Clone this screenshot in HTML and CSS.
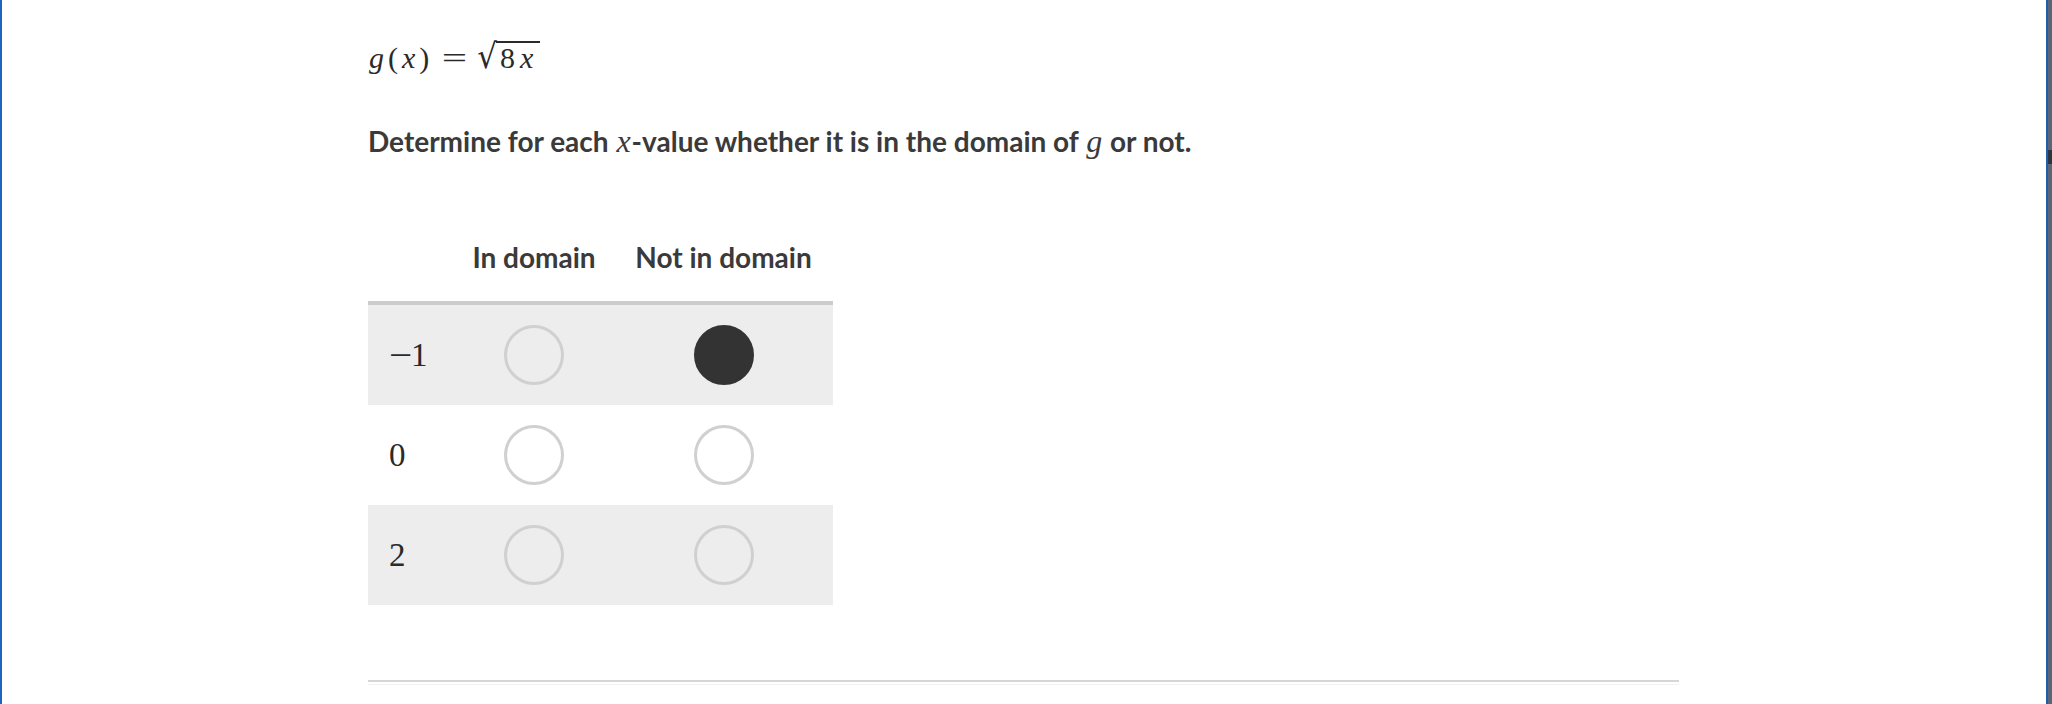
FILE: index.html
```html
<!DOCTYPE html>
<html lang="en">
<head>
<meta charset="utf-8">
<title>Domain of g</title>
<link rel="stylesheet" href="styles.css">
</head>
<body>
<div class="app">
  <div class="edge-left"></div>
  <main class="page">
    <div class="content">
      <p class="formula"><i class="var">g</i><span class="paren">(</span><i class="var">x</i><span class="paren">)</span><span class="rel">=</span><span class="surd">√</span><span class="radicand">8<i class="var">x</i></span></p>
      <p class="question">Determine for each <i class="math">x</i>-value whether it is in the domain of <i class="math">g</i> or not.</p>
      <div class="choice-table">
        <div class="row head">
          <div class="cell label"></div>
          <div class="cell">In domain</div>
          <div class="cell">Not in domain</div>
        </div>
        <div class="row shaded">
          <div class="cell label"><span class="minus">−</span>1</div>
          <div class="cell"><span class="radio"></span></div>
          <div class="cell"><span class="radio checked"></span></div>
        </div>
        <div class="row">
          <div class="cell label">0</div>
          <div class="cell"><span class="radio"></span></div>
          <div class="cell"><span class="radio"></span></div>
        </div>
        <div class="row shaded">
          <div class="cell label">2</div>
          <div class="cell"><span class="radio"></span></div>
          <div class="cell"><span class="radio"></span></div>
        </div>
      </div>
      <div class="divider"></div>
    </div>
  </main>
  <div class="edge-right">
    <div class="edge-line"></div>
    <div class="scroll"><div class="thumb"></div></div>
  </div>
</div>
</body>
</html>
```
FILE: styles.css
```css
html, body {
  margin: 0;
  padding: 0;
  background: #ffffff;
}

.app {
  display: flex;
  width: 2052px;
  height: 704px;
  overflow: hidden;
}

.edge-left {
  width: 2px;
  flex: none;
  background: #1a66c0;
}

.page {
  flex: 1;
  padding-left: 366px;
  background: #ffffff;
}

.content {
  width: 1311px;
  color: #333333;
}

.formula {
  margin: 0;
  padding-top: 41px;
  height: 30px;
  font-family: "Liberation Serif", "Times New Roman", serif;
  font-size: 30px;
  line-height: 30px;
  color: #2a2a2a;
  white-space: nowrap;
}

.formula .var {
  font-style: italic;
  padding: 0 1px;
}

.formula .paren {
  margin: 0 3px;
}

.formula .rel {
  display: inline-block;
  transform: scaleX(1.5);
  margin: 0 14px 0 14px;
}

.formula .surd {
  display: inline-block;
  font-family: "DejaVu Serif", serif;
  font-size: 31px;
  line-height: 30px;
  transform: scaleY(1.1);
  transform-origin: bottom;
  margin-right: -1px;
}

.formula .radicand {
  display: inline-block;
  line-height: 30px;
  border-top: 2px solid #2a2a2a;
  padding: 0 5px 0 4px;
  letter-spacing: 1px;
}

.formula .radicand .var {
  padding-left: 4px;
}

.question {
  margin: 54px 0 0;
  font-family: Lato, "Liberation Sans", sans-serif;
  font-weight: 700;
  font-size: 28px;
  line-height: 33.6px;
  color: #3a3a3a;
  white-space: nowrap;
}

.question .math {
  font-family: "Liberation Serif", "Times New Roman", serif;
  font-weight: 400;
  font-size: 32px;
  line-height: 0;
  padding: 0 1px;
}

.choice-table {
  margin-top: 82px;
  width: 465px;
}

.row {
  display: grid;
  grid-template-columns: 86px 160px 219px;
  height: 100px;
  align-items: center;
}

.row.head {
  height: auto;
  padding-bottom: 27px;
  border-bottom: 4px solid #cccccc;
  font-family: Lato, "Liberation Sans", sans-serif;
  font-weight: 700;
  font-size: 28px;
  line-height: 33.6px;
  color: #3a3a3a;
}

.row.shaded {
  background: #ededed;
}

.cell {
  display: flex;
  justify-content: center;
  align-items: center;
  white-space: nowrap;
}

.cell.label {
  justify-content: flex-start;
  padding-left: 21px;
  font-family: "Liberation Serif", "Times New Roman", serif;
  font-size: 33px;
  line-height: 33px;
  color: #2a2a2a;
}

.minus {
  display: inline-block;
  width: 22px;
  transform: scaleX(1.25);
  transform-origin: left center;
}

.radio {
  display: block;
  width: 60px;
  height: 60px;
  box-sizing: border-box;
  border: 3px solid #d0d0d0;
  border-radius: 50%;
}

.radio.checked {
  background: #333333;
  border-color: #333333;
}

.divider {
  margin-top: 75px;
  height: 2px;
  border-top: 2px solid #d6d6d6;
  border-bottom: 1px solid #f3f3f3;
}

.edge-right {
  display: flex;
  flex: none;
  width: 6px;
}

.edge-line {
  width: 2px;
  background: #1f5fa8;
}

.scroll {
  width: 4px;
  background: #5b6577;
  display: flex;
  flex-direction: column;
}

.thumb {
  margin-top: 150px;
  height: 14px;
  background: #2e3440;
}
```
